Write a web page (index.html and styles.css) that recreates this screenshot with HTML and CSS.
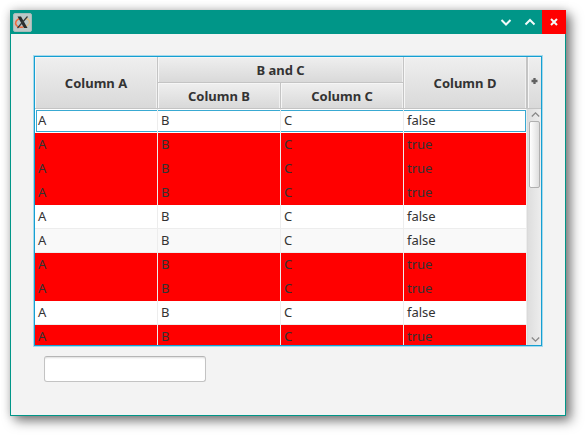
FILE: index.html
```
<!DOCTYPE html>
<html lang="en">
<head>
<meta charset="utf-8">
<title>Table</title>
<link rel="stylesheet" href="styles.css">
</head>
<body>
<div class="window">
  <header class="titlebar">
    <svg class="app-icon" width="19" height="19" viewBox="0 0 19 19">
      <rect x=".5" y=".5" width="18" height="18" rx="1.5" fill="#bcc8c7" stroke="#a5bcb9"/>
      <path d="M7 5.500C3 6.500 1.500 10 3.500 12.500C5 14.500 8 14.500 10 14" fill="none" stroke="#ee6a3c" stroke-width="1.500"/>
      <path d="M10 14C14 13.500 17 11 16.500 8.500C16 6.500 14 5.500 12.500 5.500" fill="none" stroke="#e6bd84" stroke-width="1.300"/>
      <path d="M4.500 3.500H8L14.500 15H11Z" fill="#292d2e"/>
      <path d="M14.500 3.500L4.500 15" stroke="#343839" stroke-width="1.200"/>
    </svg>
    <div class="controls">
      <svg width="24" height="24" viewBox="0 0 24 24"><path d="M7.500 10L12 14.500L16.500 10"/></svg>
      <svg width="24" height="24" viewBox="0 0 24 24"><path d="M7.500 14.500L12 10L16.500 14.500"/></svg>
      <svg class="close" width="24" height="24" viewBox="0 0 24 24"><path d="M9 9L15 15M15 9L9 15"/></svg>
    </div>
  </header>
  <main class="content">
    <div class="table">
      <div class="grid">
        <div class="head">
          <div class="th first">Column A</div>
          <div class="th group">B and C</div>
          <div class="th last">Column D</div>
          <div class="th sub b">Column B</div>
          <div class="th sub c">Column C</div>
        </div>
        <div class="rows">
          <div class="row focused"><span>A</span><span>B</span><span>C</span><span>false</span></div>
          <div class="row red"><span>A</span><span>B</span><span>C</span><span>true</span></div>
          <div class="row red"><span>A</span><span>B</span><span>C</span><span>true</span></div>
          <div class="row red"><span>A</span><span>B</span><span>C</span><span>true</span></div>
          <div class="row"><span>A</span><span>B</span><span>C</span><span>false</span></div>
          <div class="row odd"><span>A</span><span>B</span><span>C</span><span>false</span></div>
          <div class="row red"><span>A</span><span>B</span><span>C</span><span>true</span></div>
          <div class="row red"><span>A</span><span>B</span><span>C</span><span>true</span></div>
          <div class="row"><span>A</span><span>B</span><span>C</span><span>false</span></div>
          <div class="row red"><span>A</span><span>B</span><span>C</span><span>true</span></div>
        </div>
      </div>
      <div class="side">
        <div class="corner"><svg width="7" height="6" viewBox="0 0 7 6"><path d="M3.500 0V6M.5 3H6.500" stroke="#606060" stroke-width="2.300"/></svg></div>
        <div class="scrollbar">
          <svg width="9" height="12" viewBox="0 0 9 12"><path d="M.8 7.500L4.500 3.800L8.200 7.500"/></svg>
          <div class="thumb"></div>
          <svg class="down" width="9" height="12" viewBox="0 0 9 12"><path d="M.8 4.500L4.500 8.200L8.200 4.500"/></svg>
        </div>
      </div>
    </div>
    <input class="field" type="text" aria-label="Value">
  </main>
</div>
</body>
</html>
```
FILE: styles.css
```
* { box-sizing: border-box; }
body {
  margin: 0;
  padding: 10px;
  height: 436px;
  overflow: hidden;
  background: #fff;
  color: #333;
  font: 13px/24px "Noto Sans", sans-serif;
}
.window {
  width: 556px;
  height: 406px;
  border: 1px solid #009688;
  border-top: 0;
  border-radius: 0 0 1px 1px;
  background: #f3f3f3;
  box-shadow: 5px 5px 12px rgba(0, 0, 0, .5), 0 0 10px rgba(0, 0, 0, .18);
}
.titlebar {
  display: flex;
  justify-content: space-between;
  height: 24px;
  margin: 0 -1px;
  background: #009688;
}
.app-icon { margin: 3px 0 0 3px; }
.controls { display: flex; }
.controls path { fill: none; stroke: #f2fbfa; stroke-width: 2; }
.controls .close { background: #f00; }
.content { padding: 22px; }
.table {
  display: flex;
  width: 508px;
  height: 290px;
  margin-left: 1px;
  border: 1px solid #159fd2;
  box-shadow: 0 0 0 1px #a5daec;
  overflow: hidden;
}
.grid { width: 492px; height: 288px; overflow: hidden; }
.head {
  display: grid;
  grid-template: 26px 26px / repeat(4, 123px);
  font-weight: 700;
}
.th {
  display: flex;
  align-items: center;
  justify-content: center;
  border: solid #c4c4c4;
  border-width: 0 1px 1px 0;
  background: linear-gradient(#efefef, #d9d9d9);
  box-shadow: inset 1px 1px #f6f6f6, inset -1px 0 #f0f0f0;
}
.first { grid-area: 1 / 1 / 3 / 2; }
.last { grid-area: 1 / 4 / 3 / 5; }
.group { grid-area: 1 / 2 / 2 / 4; }
.sub { padding-top: 1px; }
.b { grid-area: 2 / 2; }
.c { grid-area: 2 / 3; }
.row {
  display: grid;
  grid-template-columns: repeat(4, 123px);
  height: 24px;
  border-bottom: 1px solid #ededed;
  background: #fff;
}
.row span {
  height: 24px;
  padding-left: 3px;
  line-height: 23px;
  border-right: 1px solid #ededed;
}
.row.odd { background: #f9f9f9; }
.row.red { background: #f00; border-bottom-color: #f00; }
.row.focused {
  border-bottom: 0;
  box-shadow: inset 0 0 0 1px #fff, inset 0 0 0 2px #39a9d2;
}
.side { width: 14px; flex: none; }
.corner {
  display: flex;
  align-items: center;
  justify-content: center;
  height: 52px;
  padding-bottom: 3px;
  border: solid #c4c4c4;
  border-width: 0 0 1px 1px;
  background: linear-gradient(#efefef, #d9d9d9);
  box-shadow: inset 1px 1px #f6f6f6;
}
.scrollbar {
  display: flex;
  flex-direction: column;
  align-items: center;
  height: 236px;
  padding-right: 1px;
  border-left: 1px solid #dadada;
  background: linear-gradient(90deg, #dedede, #ededed);
}
.scrollbar svg { position: relative; left: 1px; flex: none; }
.scrollbar path { fill: none; stroke: #888; stroke-width: 1.300; }
.thumb {
  width: 11px;
  height: 67px;
  margin-left: 1px;
  border: 1px solid #b0b0b0;
  border-radius: 2px;
  background: linear-gradient(90deg, #fff, #dedede);
}
.scrollbar .down { margin-top: auto; }
.field {
  display: block;
  width: 162px;
  height: 26px;
  margin: 10px 0 0 11px;
  padding: 0 6px;
  border: 1px solid #c3c3c3;
  border-top-color: #b5b5b5;
  border-radius: 3px;
  background: #fff;
  box-shadow: inset 0 2px 2px -1px #ddd;
  font: inherit;
}
```
